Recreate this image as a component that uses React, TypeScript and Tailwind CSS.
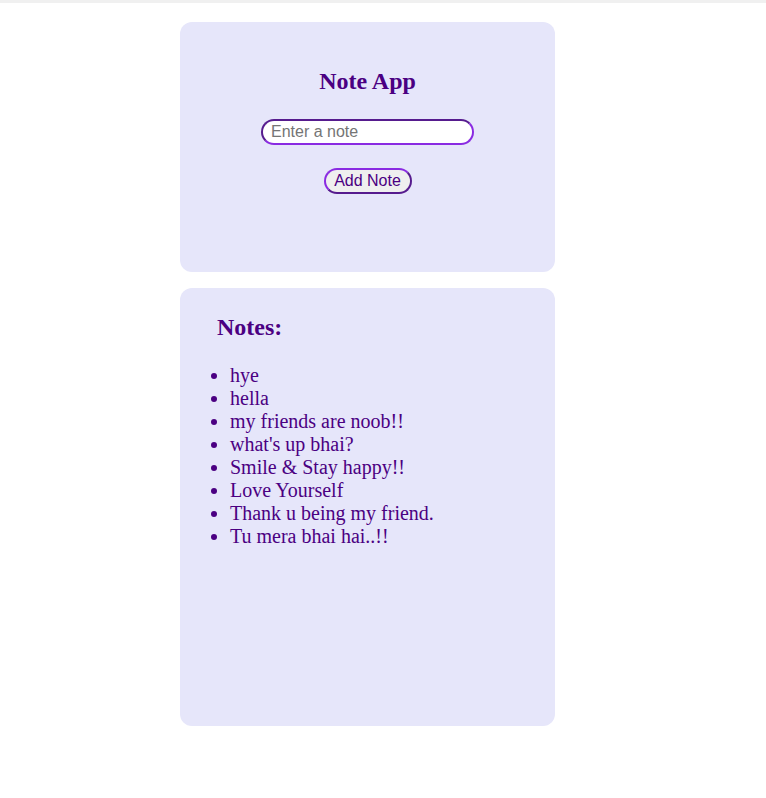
import React from "react";

const notes = [
  "hye",
  "hella",
  "my friends are noob!!",
  "what's up bhai?",
  "Smile & Stay happy!!",
  "Love Yourself",
  "Thank u being my friend.",
  "Tu mera bhai hai..!!",
];

export default function App() {
  return (
    <div className="min-h-[798px] bg-white" style={{ fontFamily: '"Liberation Serif", "Times New Roman", serif' }}>
      <div className="h-[3px] bg-[#f0f0f0]" />
      <div className="flex flex-col items-start pl-[180px] pt-[19px] gap-[16px]">
        <div className="w-[375px] h-[250px] rounded-[12px] bg-[#e6e6fa] flex flex-col items-center pt-[45px]">
          <h2 className="text-[24px] leading-[28px] font-bold text-[#4b0082] m-0">Note App</h2>
          <input
            placeholder="Enter a note"
            className="mt-[24px] w-[213px] h-[26px] rounded-full bg-white border-2 border-[#8a2be2] [border-style:inset] px-[8px] text-[16px] text-[#4b0082] placeholder:text-[#757575] outline-none"
            style={{ fontFamily: '"Liberation Sans", Arial, sans-serif' }}
          />
          <button
            className="mt-[23px] h-[26px] w-[88px] rounded-full bg-[#efefef] border-2 border-[#8a2be2] [border-style:outset] text-[16px] leading-[20px] text-[#4b0082]"
            style={{ fontFamily: '"Liberation Sans", Arial, sans-serif' }}
          >
            Add Note
          </button>
        </div>
        <div className="w-[375px] h-[438px] rounded-[12px] bg-[#e6e6fa] pt-[25px]">
          <h2 className="ml-[37px] text-[24px] leading-[28px] font-bold text-[#4b0082]">Notes:</h2>
          <ul className="mt-[23px] pl-[50px] list-disc text-[20px] leading-[23px] text-[#4b0082]">
            {notes.map((n) => (
              <li key={n}>{n}</li>
            ))}
          </ul>
        </div>
      </div>
    </div>
  );
}
